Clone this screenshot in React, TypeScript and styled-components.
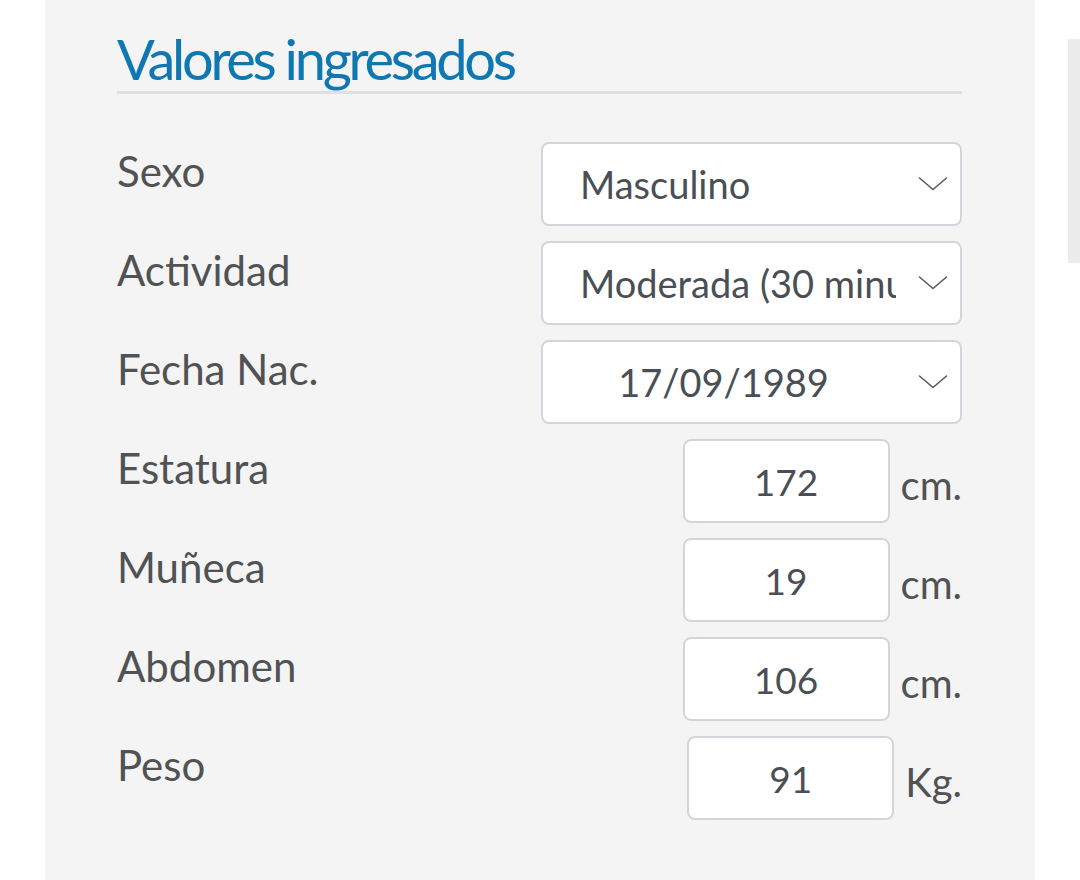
import React from "react";
import styled, { createGlobalStyle } from "styled-components";

const GlobalStyle = createGlobalStyle`
  html, body {
    margin: 0;
    padding: 0;
    background: #ffffff;
    font-family: Lato, "Noto Sans", sans-serif;
  }
`;

interface SelectField {
  kind: "select";
  label: string;
  value: string;
  centered?: boolean;
}

interface NumberField {
  kind: "number";
  label: string;
  value: string;
  unit: string;
}

type Field = SelectField | NumberField;

const fields: Field[] = [
  { kind: "select", label: "Sexo", value: "Masculino" },
  { kind: "select", label: "Actividad", value: "Moderada (30 minutos diarios)" },
  { kind: "select", label: "Fecha Nac.", value: "17/09/1989", centered: true },
  { kind: "number", label: "Estatura", value: "172", unit: "cm." },
  { kind: "number", label: "Muñeca", value: "19", unit: "cm." },
  { kind: "number", label: "Abdomen", value: "106", unit: "cm." },
  { kind: "number", label: "Peso", value: "91", unit: "Kg." },
];

const Chevron = () => (
  <svg width="30" height="16" viewBox="0 0 30 16" fill="none">
    <path d="M1.5 2 L15 13.5 L28.5 2" stroke="#555a5f" strokeWidth="1.6" strokeLinecap="round" strokeLinejoin="round" />
  </svg>
);

const App = () => {
  return (
    <>
      <GlobalStyle />
      <Page>
        <Panel>
          <Title>Valores ingresados</Title>
          <Form>
            {fields.map((f) => (
              <Row key={f.label}>
                <Label>{f.label}</Label>
                {f.kind === "select" ? (
                  <SelectBox>
                    <SelectValue $centered={f.centered}>{f.value}</SelectValue>
                    <ChevronSlot>
                      <Chevron />
                    </ChevronSlot>
                  </SelectBox>
                ) : (
                  <NumberGroup>
                    <NumberBox>{f.value}</NumberBox>
                    <Unit>{f.unit}</Unit>
                  </NumberGroup>
                )}
              </Row>
            ))}
          </Form>
        </Panel>
        <SideStrip />
      </Page>
    </>
  );
};

export default App;

const Page = styled.div`
  width: 1080px;
  height: 880px;
  display: flex;
  align-items: flex-start;
  overflow: hidden;
`;

const Panel = styled.div`
  margin-left: 45px;
  width: 990px;
  height: 880px;
  flex-shrink: 0;
  box-sizing: border-box;
  background: #f4f4f4;
  padding: 27px 73px 0 72px;
`;

const SideStrip = styled.div`
  margin-left: 33px;
  margin-top: 39px;
  width: 20px;
  height: 224px;
  flex-shrink: 0;
  background: #ececec;
`;

const Title = styled.h2`
  margin: 0;
  font-size: 56px;
  font-weight: 400;
  letter-spacing: -3.3px;
  line-height: 64px;
  color: #0f78b2;
  padding-bottom: 0;
  border-bottom: 3px solid #dde1e6;
`;

const Form = styled.div`
  display: flex;
  flex-direction: column;
  gap: 15px;
  margin-top: 48px;
`;

const Row = styled.div`
  display: flex;
  justify-content: space-between;
  align-items: flex-start;
  height: 84px;
`;

const Label = styled.div`
  font-size: 42px;
  line-height: 48px;
  color: #505254;
  padding-top: 5px;
`;

const SelectBox = styled.div`
  width: 421px;
  height: 84px;
  box-sizing: border-box;
  border: 2.5px solid #d2d6da;
  border-radius: 8px;
  background: #ffffff;
  display: flex;
  align-items: center;
`;

const SelectValue = styled.div<{ $centered?: boolean }>`
  flex: 1;
  min-width: 0;
  overflow: hidden;
  white-space: nowrap;
  font-size: 38px;
  color: #4a4f55;
  padding-left: ${(p) => (p.$centered ? "8px" : "37px")};
  text-align: ${(p) => (p.$centered ? "center" : "left")};
`;

const ChevronSlot = styled.div`
  width: 64px;
  flex-shrink: 0;
  display: flex;
  justify-content: flex-end;
  padding-right: 12px;
  box-sizing: border-box;
`;

const NumberGroup = styled.div`
  display: flex;
  align-items: center;
  gap: 11px;
  height: 84px;
`;

const NumberBox = styled.div`
  width: 207px;
  height: 84px;
  box-sizing: border-box;
  border: 2.5px solid #d2d6da;
  border-radius: 8px;
  background: #ffffff;
  display: flex;
  align-items: center;
  justify-content: center;
  font-size: 37px;
  color: #4a4f55;
`;

const Unit = styled.div`
  font-size: 40px;
  color: #505254;
  padding-top: 8px;
`;
